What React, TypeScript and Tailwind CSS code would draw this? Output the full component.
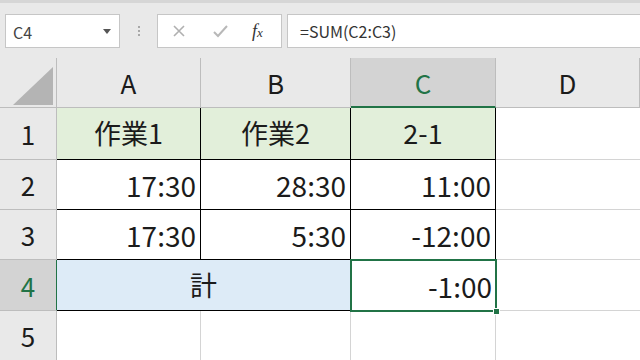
import React from "react";

const font = { fontFamily: '"Noto Sans CJK JP", "Noto Sans", sans-serif' };

const cols = ["A", "B", "C", "D"];

const App: React.FC = () => {
  return (
    <div className="w-[640px] h-[360px] overflow-hidden bg-white text-[#1b1b1b]" style={font}>
      {/* formula bar */}
      <div className="h-[58px] bg-[#e9e9e9] border-t-[3px] border-[#d6d6d6] flex items-start pt-[11px]">
        <div className="ml-[5px] w-[115px] h-[34px] bg-white border border-[#c6c6c6] flex items-center justify-between pl-[7px] pr-[8px]">
          <span className="text-[16px] text-[#444] mt-[2px]">C4</span>
          <svg width="8" height="5" viewBox="0 0 8 5">
            <path d="M0 0h8L4 5z" fill="#555" />
          </svg>
        </div>
        <div className="w-[37px] h-[34px] flex flex-col items-center justify-center gap-[2px]">
          <span className="w-[2px] h-[2px] bg-[#a8a8a8]" />
          <span className="w-[2px] h-[2px] bg-[#a8a8a8]" />
          <span className="w-[2px] h-[2px] bg-[#a8a8a8]" />
        </div>
        <div className="w-[125px] h-[34px] bg-white border border-[#c6c6c6] flex items-center">
          <svg className="ml-[14px]" width="14" height="14" viewBox="0 0 14 14">
            <path d="M2 2l10 10M12 2L2 12" stroke="#b0b0b0" strokeWidth="1.6" />
          </svg>
          <svg className="ml-[27px]" width="15" height="13" viewBox="0 0 15 13">
            <path d="M1 7l4 4 9-10" stroke="#b8b8b8" strokeWidth="2" fill="none" />
          </svg>
          <span
            className="ml-[24px] text-[18px] italic text-[#333] leading-none"
            style={{ fontFamily: '"Liberation Serif", serif' }}
          >
            f<span className="text-[13px]">x</span>
          </span>
        </div>
        <div className="ml-[5px] flex-1 h-[34px] bg-white border border-[#c6c6c6] border-r-0 flex items-center pl-[12px]">
          <span className="text-[16px] text-[#333]">=SUM(C2:C3)</span>
        </div>
      </div>

      {/* sheet */}
      <div className="grid grid-cols-[57px_144px_150px_145px_1fr] grid-rows-[50px_52px_50px_50px_51px_50px]">
        {/* header row */}
        <div className="relative bg-[#e9e9e9] border-r border-b border-[#bdbdbd]">
          <svg className="absolute left-[13px] top-[9px]" width="40" height="38" viewBox="0 0 40 38">
            <path d="M40 0V38H0z" fill="#b4b4b4" />
          </svg>
        </div>
        {cols.map((c) => (
          <div
            key={c}
            className={
              c === "C"
                ? "bg-[#d3d3d3] border-r border-[#bdbdbd] border-b-2 border-b-[#217346] flex items-center justify-center text-[26px] text-[#217346]"
                : "bg-[#e9e9e9] border-r border-b border-[#bdbdbd] flex items-center justify-center text-[26px]"
            }
          >
            {c}
          </div>
        ))}

        {/* row 1 */}
        <RowHead n="1" />
        <div className="bg-[#e2efda] border-r border-b border-black flex items-center justify-center text-[27px]">作業1</div>
        <div className="bg-[#e2efda] border-r border-b border-black flex items-center justify-center text-[27px]">作業2</div>
        <div className="bg-[#e2efda] border-r border-b border-black border-l border-l-black -ml-px flex items-center justify-center text-[27px]">2-1</div>
        <div className="border-b border-[#d4d4d4]" />

        {/* row 2 */}
        <RowHead n="2" />
        <Num v="17:30" />
        <Num v="28:30" />
        <Num v="11:00" />
        <div className="border-b border-[#d4d4d4]" />

        {/* row 3 */}
        <RowHead n="3" />
        <Num v="17:30" />
        <Num v="5:30" />
        <Num v="-12:00" />
        <div className="border-b border-[#d4d4d4]" />

        {/* row 4 */}
        <div className="bg-[#d3d3d3] border-r-2 border-r-[#217346] border-b border-b-[#bdbdbd] flex items-center justify-center text-[26px] text-[#217346] -mr-px">
          4
        </div>
        <div className="col-span-2 bg-[#ddebf7] border-r border-b border-black flex items-center justify-center text-[27px]">
          計
        </div>
        <div className="relative bg-white flex items-center justify-end pr-[4px] text-[28px]">
          <div className="absolute -left-px -top-px -right-px -bottom-px border-2 border-[#217346]" />
          <div className="absolute -right-[4px] -bottom-[4px] w-[7px] h-[7px] bg-[#217346] border border-white" />
          -1:00
        </div>
        <div className="border-b border-[#d4d4d4]" />

        {/* row 5 */}
        <RowHead n="5" />
        <div className="border-r border-[#d4d4d4]" />
        <div className="border-r border-[#d4d4d4]" />
        <div className="border-r border-[#d4d4d4]" />
        <div />
      </div>
    </div>
  );
};

const RowHead: React.FC<{ n: string }> = ({ n }) => (
  <div className="bg-[#e9e9e9] border-r border-b border-[#bdbdbd] flex items-center justify-center text-[26px]">
    {n}
  </div>
);

const Num: React.FC<{ v: string }> = ({ v }) => (
  <div className="bg-white border-r border-b border-black flex items-center justify-end pr-[4px] text-[28px]">
    {v}
  </div>
);

export default App;
